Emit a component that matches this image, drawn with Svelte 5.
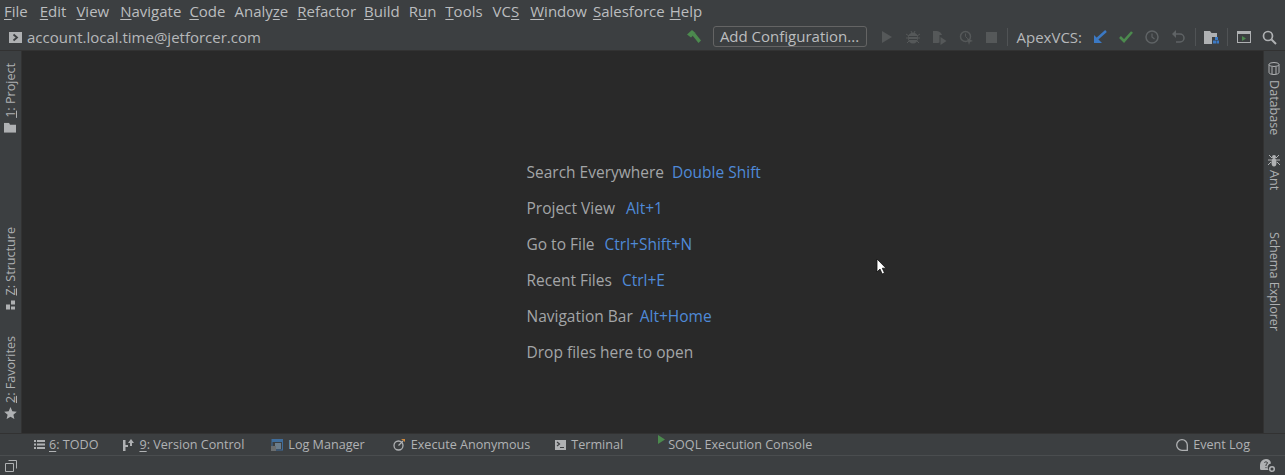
<script>
  const menu = [
    ['F', 'ile'], ['E', 'dit'], ['V', 'iew'], ['N', 'avigate'], ['C', 'ode'],
    ['', 'Analy', 'z', 'e'], ['R', 'efactor'], ['B', 'uild'], ['', 'R', 'u', 'n'], ['T', 'ools'],
    ['', 'VC', 'S', ''], ['W', 'indow'], ['S', 'alesforce'], ['H', 'elp']
  ];
  const hints = [
    ['Search Everywhere', 'Double Shift'],
    ['Project View', 'Alt+1'],
    ['Go to File', 'Ctrl+Shift+N'],
    ['Recent Files', 'Ctrl+E'],
    ['Navigation Bar', 'Alt+Home'],
    ['Drop files here to open', '']
  ];
</script>

<div class="ide">
  <nav class="menu">
    {#each menu as m}
      <span class="mi">{#if m[0]}<u>{m[0]}</u>{m[1]}{:else}{m[1]}<u>{m[2]}</u>{m[3]}{/if}</span>
    {/each}
  </nav>

  <header class="toolbar">
    <div class="crumb">
      <svg width="13" height="11" viewBox="0 0 13 11"><rect width="13" height="11" fill="#afb1b3"/><path d="M4.500 2.500 8 5.500l-3.500 3" fill="none" stroke="#3c3f41" stroke-width="1.800"/></svg>
      <span>account.local.time@jetforcer.com</span>
    </div>
    <div class="tools">
      <svg class="hammer" width="16" height="16" viewBox="0 0 16 16"><path d="M1 5.500 6 1l3.500 3L5 8.500z" fill="#4c8a4e"/><path d="M6.500 6.500 9 4l6 7.500-2.500 2.500z" fill="#4c8a4e"/></svg>
      <button class="config">Add Configuration...</button>
      <svg class="ic g1" width="12" height="14" viewBox="0 0 12 14"><path d="M1 1l10 6-10 6z" fill="#555859"/></svg>
      <svg class="ic g2" width="14" height="14" viewBox="0 0 14 14"><ellipse cx="7" cy="8" rx="5" ry="5.500" fill="#555859"/><path d="M0 4l3 2M14 4l-3 2M0 8h3M14 8h-3M1 13l2-2M13 13l-2-2M5 1l1 2M9 1L8 3" stroke="#555859" fill="none"/><path d="M3 6.500h8M3 9.500h8" stroke="#3c3f41" fill="none"/></svg>
      <svg class="ic g3" width="15" height="15" viewBox="0 0 15 15"><path d="M1 1h4a6 6 0 0 1 5 4H7.500v7.500L6 13H1z" fill="#555859"/><path d="M8.500 7l6 4-6 4z" fill="#555859"/></svg>
      <svg class="ic g4" width="15" height="15" viewBox="0 0 15 15"><circle cx="6.500" cy="6.500" r="5" fill="none" stroke="#555859" stroke-width="1.500"/><path d="M6.500 3.500v3l2 2" fill="none" stroke="#555859"/><path d="M8 8l6 3-3 1-1 3z" fill="#555859"/></svg>
      <span class="stop"></span>
      <i class="sep"></i>
      <span class="vcs">ApexVCS:</span>
      <svg class="ic v1" width="14" height="14" viewBox="0 0 14 14"><path d="M13 1 4 9" stroke="#3b79c4" stroke-width="2.400" fill="none"/><path d="M1 13V5l8 8z" fill="#3b79c4"/></svg>
      <svg class="ic v2" width="14" height="12" viewBox="0 0 14 12"><path d="M1 6l4 4 8-9" stroke="#4c8a4e" stroke-width="2.600" fill="none"/></svg>
      <svg class="ic v3" width="14" height="14" viewBox="0 0 14 14"><circle cx="7" cy="7" r="6" fill="none" stroke="#5f6365" stroke-width="1.500"/><path d="M7 3.500V7l2.500 2" fill="none" stroke="#5f6365" stroke-width="1.200"/></svg>
      <svg class="ic v4" width="14" height="14" viewBox="0 0 14 14"><path d="M3 4h6a3.500 3.500 0 0 1 0 8H5" fill="none" stroke="#5f6365" stroke-width="1.500"/><path d="M5 0v8L1 4z" fill="#5f6365"/></svg>
      <i class="sep s2"></i>
      <svg class="ic v5" width="15" height="13" viewBox="0 0 15 13"><path d="M0 0h6l1.500 2H13v4H8v7H0z" fill="#afb1b3"/><rect x="11" y="6" width="3" height="3" fill="#3b79c4"/><rect x="9" y="9.500" width="3" height="3" fill="#3b79c4"/><rect x="12.500" y="9.500" width="2.500" height="3" fill="#3b79c4"/></svg>
      <i class="sep s3"></i>
      <svg class="ic v6" width="14" height="12" viewBox="0 0 14 12"><rect x=".5" y=".5" width="13" height="11" fill="none" stroke="#afb1b3"/><path d="M0 0h14v3H0z" fill="#afb1b3"/><path d="M5 5l4 2.500L5 10z" fill="#4c8a4e"/></svg>
      <svg class="ic v7" width="15" height="15" viewBox="0 0 15 15"><circle cx="6" cy="6" r="4.500" fill="none" stroke="#afb1b3" stroke-width="1.700"/><path d="M9.500 9.500 14 14" stroke="#afb1b3" stroke-width="2"/></svg>
    </div>
  </header>

  <div class="middle">
    <aside class="side left">
      <div class="vt project"><svg width="12" height="10" viewBox="0 0 12 10"><path d="M0 0h5l1 2h6v8H0z" fill="#afb1b3"/></svg><span><u>1</u>: Project</span></div>
      <div class="low">
        <div class="vt"><svg width="11" height="11" viewBox="0 0 11 11"><path d="M1 5h4v5H1zM6 7h4v3H6zM6 1h4v4H6z" fill="#afb1b3"/></svg><span><u>Z</u>: Structure</span></div>
        <div class="vt"><svg width="13" height="12" viewBox="0 0 13 12"><path d="M6.500 0l1.800 4.200 4.500.4-3.400 3 1 4.400-3.900-2.300L2.600 12l1-4.400L.2 4.600l4.500-.4z" fill="#afb1b3"/></svg><span><u>2</u>: Favorites</span></div>
      </div>
    </aside>

    <main class="welcome">
      {#each hints as h}
        <p>{h[0]}{#if h[1]}<b>{h[1]}</b>{/if}</p>
      {/each}
    </main>

    <aside class="side right">
      <div class="vr db"><svg width="12" height="13" viewBox="0 0 12 13"><g fill="none" stroke="#afb1b3"><ellipse cx="6" cy="2.500" rx="5" ry="2"/><path d="M1 2.500v8c0 1 2 2 5 2s5-1 5-2v-8M4 5v7M8 5v7"/></g></svg><span>Database</span></div>
      <div class="vr ant"><svg width="12" height="13" viewBox="0 0 12 13"><ellipse cx="6" cy="3" rx="2" ry="2" fill="#afb1b3"/><ellipse cx="6" cy="8.500" rx="2.500" ry="4" fill="#afb1b3"/><path d="M1 1l3 3M11 1L8 4M0 6h12M0 11l3-3M12 11L9 8" stroke="#afb1b3" fill="none"/></svg><span>Ant</span></div>
      <div class="vr schema"><span>Schema Explorer</span></div>
    </aside>

    <svg class="cursor" width="12" height="18" viewBox="0 0 12 18"><path d="M1 1v13l3-3 2.200 5 2.300-1-2.200-4.800H10z" fill="#fff" stroke="#111" stroke-width=".8"/></svg>
  </div>

  <div class="bottom">
    <div class="tabs">
      <span class="tab t1"><svg width="11" height="9" viewBox="0 0 11 9"><path d="M0 0h2v2H0zM3 0h8v2H3zM0 3.500h2v2H0zM3 3.500h8v2H3zM0 7h2v2H0zM3 7h8v2H3z" fill="#afb1b3"/></svg><span><u>6</u>: TODO</span></span>
      <span class="tab t2"><svg width="11" height="12" viewBox="0 0 11 12"><path d="M0 1h2.500v11H0zM2 6h3v2H2z" fill="#afb1b3"/><path d="M8 0l3 4H9v3H7V4H5z" fill="#afb1b3"/></svg><span><u>9</u>: Version Control</span></span>
      <span class="tab t3"><svg width="12" height="12" viewBox="0 0 12 12"><rect x="1" y=".5" width="10.500" height="10.500" fill="none" stroke="#3f6d9c"/><path d="M1 1h11v2H1z" fill="#3f6d9c"/><rect x="4" y="4" width="6" height="6" fill="#6b7d8c"/><rect x="0" y="7" width="5" height="5" fill="#6a6d6f"/></svg><span>Log Manager</span></span>
      <span class="tab t4"><svg width="12" height="12" viewBox="0 0 12 12"><circle cx="5.500" cy="6.500" r="4.500" fill="none" stroke="#afb1b3" stroke-width="1.300"/><path d="M5.500 6.500 10 2" stroke="#afb1b3" stroke-width="1.300"/><path d="M8 0h4v3z" fill="#d08a3e"/></svg><span>Execute Anonymous</span></span>
      <span class="tab t5"><svg width="11" height="10" viewBox="0 0 11 10"><rect width="11" height="10" fill="#afb1b3"/><path d="M2 2l2.500 2L2 6M5 7.500h4" fill="none" stroke="#3c3f41" stroke-width="1.200"/></svg><span>Terminal</span></span>
      <span class="tab t6"><svg class="play" width="7" height="9" viewBox="0 0 7 9"><path d="M0 0l7 4.500L0 9z" fill="#4c8a4e"/></svg><span>SOQL Execution Console</span></span>
    </div>
    <span class="tab log"><svg width="12" height="12" viewBox="0 0 12 12"><path d="M6 .7a5.300 5.300 0 0 1 5.300 5.300v5.300H6A5.300 5.300 0 0 1 6 .7z" fill="none" stroke="#afb1b3" stroke-width="1.300"/></svg><span>Event Log</span></span>
  </div>

  <footer class="status">
    <svg width="12" height="12" viewBox="0 0 12 12"><path d="M3.500.5h8v8M.5 3.500h8v8h-8z" fill="none" stroke="#afb1b3"/></svg>
    <svg class="hat" width="16" height="15" viewBox="0 0 16 15"><path d="M6 1a5 5 0 0 1 5 4.500A4 4 0 0 0 8.500 12H1.500Q0 12 0 10.500V7a6 6 0 0 1 6-6z" fill="#afb1b3"/><path d="M4.300 4.500Q6 3 7.500 4.500 7.500 6 6 6.500V8M6 9v1.200" fill="none" stroke="#3c3f41" stroke-width="1"/><circle cx="12" cy="11" r="2.300" fill="none" stroke="#afb1b3" stroke-width="1.500"/></svg>
  </footer>
</div>

<style>
  :global(body) { margin: 0; background: #292929; }
  .ide {
    width: 1285px; height: 475px; display: flex; flex-direction: column; overflow: hidden;
    background: #3c3f41; color: #b6b8ba;
    font-family: "Open Sans", "Noto Sans", "DejaVu Sans", sans-serif;
    font-size: 14px;
  }
  u { text-underline-offset: 2px; text-decoration-thickness: 1px; }
  .vt u { text-underline-offset: -1px; }
  .menu { height: 23px; flex: none; box-sizing: border-box; padding: 0 0 2px 4px; display: flex; align-items: center; gap: 9px; color: #bbbdbf; font-size: 15px; }
  .mi { white-space: nowrap; }
  .mi:nth-child(1) { margin-right: 3px; }
  .mi:nth-child(2) { margin-right: 1px; }
  .mi:nth-child(3) { margin-right: 2px; }
  .mi:nth-child(4) { margin-right: -1px; }
  .mi:nth-child(7) { margin-right: -1px; }
  .mi:nth-child(10) { margin-right: 1px; }
  .mi:nth-child(11) { margin-right: 2px; }
  .mi:nth-child(12) { margin-right: -3px; }
  .mi:nth-child(13) { margin-right: -4px; }
  .toolbar { height: 28px; flex: none; box-sizing: border-box; border-bottom: 1px solid #323232; display: flex; align-items: center; justify-content: space-between; padding: 1px 8px 0 9px; }
  .crumb { display: flex; align-items: center; gap: 5px; font-size: 15px; }
  .tools { display: flex; align-items: center; }
  .hammer { margin-right: 11px; }
  .config { height: 21px; width: 154px; box-sizing: border-box; padding: 0; background: transparent; border: 1px solid #646464; border-radius: 3px; color: #bbbdbf; font: inherit; font-size: 15px; line-height: 17px; margin: 0 14px 1px 0; }
  .ic { flex: none; }
  .g1 { margin-right: 13px; } .g2 { margin-right: 12px; } .g3 { margin-right: 12px; } .g4 { margin-right: 12px; }
  .stop { width: 11px; height: 11px; background: #555859; margin-right: 10px; }
  .sep { width: 1px; height: 18px; background: #505355; margin-right: 9px; }
  .vcs { font-size: 15px; margin-right: 11px; }
  .v1 { margin-right: 12px; } .v2 { margin-right: 12px; } .v3 { margin-right: 12px; } .v4 { margin-right: 10px; }
  .s2 { margin-right: 8px; } .v5 { margin-right: 8px; }
  .s3 { margin-right: 9px; } .v6 { margin-right: 11px; }
  .middle { position: relative; flex: 1; min-height: 0; display: flex; background: #292929; }
  .side { flex: none; background: #3c3f41; display: flex; flex-direction: column; font-size: 12.600px; color: #aeb0b2; }
  .left { width: 21px; justify-content: space-between; border-right: 1px solid #323232; }
  .right { width: 22px; border-left: 1px solid #323232; box-sizing: border-box; }
  .vt { writing-mode: vertical-rl; transform: rotate(180deg); display: flex; align-items: center; gap: 4px; height: max-content; width: 21px; line-height: 21px; white-space: nowrap; }
  .project { margin-top: 12px; gap: 5px; }
  .low { display: flex; flex-direction: column; gap: 25px; padding-bottom: 14px; }
  .vr { writing-mode: vertical-rl; display: flex; align-items: center; gap: 5px; width: 20px; white-space: nowrap; }
  .db { margin-top: 11px; }
  .ant { margin-top: 19px; gap: 3px; }
  .schema { margin-top: 41px; }
  .vt svg { transform: rotate(180deg); }
  .welcome { flex: 1; display: flex; flex-direction: column; justify-content: center; align-items: center; padding: 39px 0 0 2px; box-sizing: border-box; font-size: 15.500px; color: #a3a5a7; }
  .welcome p { margin: 0; width: 234px; height: 36px; line-height: 36px; white-space: nowrap; }
  .welcome b { font-weight: 400; color: #4f8ad8; margin-left: 8px; }
  .welcome p:nth-child(2) b { margin-left: 11px; }
  .welcome p:nth-child(3) b, .welcome p:nth-child(4) b { margin-left: 10px; }
  .welcome p:nth-child(5) b { margin-left: 7px; }
  .cursor { position: absolute; left: 876px; top: 207px; }
  .bottom { height: 23px; flex: none; box-sizing: border-box; border-top: 1px solid #323232; border-bottom: 1px solid #4a4d4f; display: flex; align-items: center; justify-content: space-between; padding: 0 35px 0 34px; font-size: 12.600px; color: #b0b2b4; }
  .tabs { display: flex; align-items: center; }
  .tab { display: flex; align-items: center; gap: 5px; white-space: nowrap; position: relative; }
  .t1 { margin-right: 25px; gap: 4px; }
  .t2 { margin-right: 27px; }
  .t3 { margin-right: 28px; }
  .t4 { margin-right: 25px; gap: 6px; }
  .t5 { margin-right: 45px; }
  .play { position: absolute; left: -10px; top: -1px; }
  .status { height: 19px; flex: none; display: flex; align-items: center; justify-content: space-between; padding: 0 9px 0 5px; }
</style>
